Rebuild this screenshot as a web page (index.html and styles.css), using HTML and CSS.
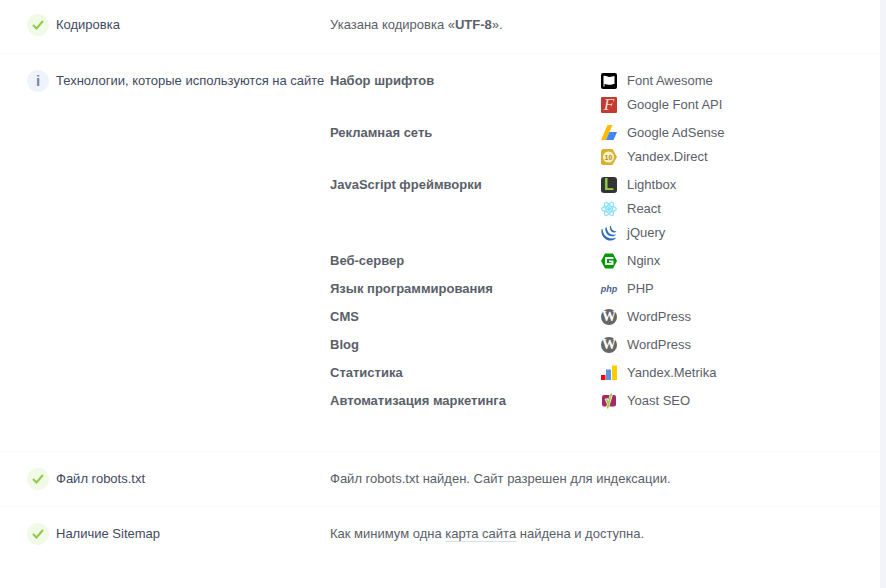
FILE: index.html
```html
<!DOCTYPE html>
<html lang="ru">
<head>
<meta charset="UTF-8">
<meta name="viewport" content="width=device-width, initial-scale=1.0">
<title>Технологии сайта</title>
<link rel="stylesheet" href="styles.css">
</head>
<body>

<div class="report">
  <!-- Кодировка -->
  <div class="row row-first">
    <div class="row-title">
      <span class="mark mark-ok"><svg width="12" height="10" viewBox="0 0 12 10"><path d="M1 5 4.500 8.500 11 1" fill="none" stroke="#92c94a" stroke-width="2"/></svg></span>
      Кодировка
    </div>
    <div class="row-body">Указана кодировка «<b>UTF-8</b>».</div>
  </div>

  <!-- Технологии -->
  <div class="row row-tech">
    <div class="row-title">
      <span class="mark mark-info">i</span>
      Технологии, которые используются на сайте
    </div>
    <div class="row-body">
      <div class="tech-group">
        <div class="tech-name">Набор шрифтов</div>
        <ul class="tech-list">
          <li><span class="logo">
            <svg width="16" height="16" viewBox="0 0 16 16"><rect width="16" height="16" rx="2" fill="#000"/><path d="M2.500 3C4.500 2.300 6.500 4 8.500 4 10.500 4 12 3 13.500 3V11C12 11 10.500 11.800 8.500 11.800 6.500 11.800 4.500 10.500 3.500 11V13.500H2.500Z" fill="#fff"/></svg>
          </span>Font Awesome</li>
          <li><span class="logo logo-gfont">F</span>Google Font API</li>
        </ul>
      </div>
      <div class="tech-group">
        <div class="tech-name">Рекламная сеть</div>
        <ul class="tech-list">
          <li><span class="logo">
            <svg width="16" height="16" viewBox="0 0 16 16"><path d="M0 15 6.500 0H11.500L5 15Z" fill="#fbbc04"/><path d="M8.500 7H16L12.500 15H5Z" fill="#4285f4"/></svg>
          </span>Google AdSense</li>
          <li><span class="logo">
            <svg width="16" height="16" viewBox="0 0 16 16"><path d="M1.500 0H11.500L16 8 11.500 16H1.500L0 14.500V1.500Z" fill="#d9b030"/><circle cx="7.500" cy="8" r="5.500" fill="#fdf3c4"/><text x="7.500" y="10.500" class="logo-ten">10</text></svg>
          </span>Yandex.Direct</li>
        </ul>
      </div>
      <div class="tech-group">
        <div class="tech-name">JavaScript фреймворки</div>
        <ul class="tech-list">
          <li><span class="logo logo-lightbox">L</span>Lightbox</li>
          <li><span class="logo">
            <svg width="16" height="16" viewBox="0 0 16 16" fill="none" stroke="#8be0fb" stroke-width="1.200"><ellipse cx="8" cy="8" rx="7.400" ry="3"/><ellipse cx="8" cy="8" rx="7.400" ry="3" transform="rotate(60 8 8)"/><ellipse cx="8" cy="8" rx="7.400" ry="3" transform="rotate(120 8 8)"/><circle cx="8" cy="8" r="1.500" fill="#8be0fb"/></svg>
          </span>React</li>
          <li><span class="logo">
            <svg width="16" height="16" viewBox="0 0 16 16" fill="#2f6bb8"><path d="M0.500 4C-0.500 10 4 16 10 15.500 12.500 15.300 14.500 14 15.500 12.500 12 14 7 14 4 10.500 2.500 8.500 1.500 6 1.500 4Z"/><path d="M4.500 2.500C3.500 7 7 11.500 11 11.300 13 11.200 14.500 10.300 15.500 9.200 12.500 10.300 9.500 9.800 7.500 7.500 6.500 6 5.800 4 5.800 2.500Z"/><path d="M9 1C8.300 4.500 10.500 7.500 13 7.600 14 7.600 15 7 15.500 6.300 13.500 6.600 11.500 5.500 10.500 3.500 10.200 2.800 10 1.800 10 1Z"/></svg>
          </span>jQuery</li>
        </ul>
      </div>
      <div class="tech-group">
        <div class="tech-name">Веб-сервер</div>
        <ul class="tech-list">
          <li><span class="logo">
            <svg width="16" height="16" viewBox="0 0 16 16"><path d="M4 0.500H12L16 8 12 15.500H4L0 8Z" fill="#009900"/><path d="M12.500 5H5V11H11.500V8.300H8" fill="none" stroke="#fff" stroke-width="1.800"/></svg>
          </span>Nginx</li>
        </ul>
      </div>
      <div class="tech-group">
        <div class="tech-name">Язык программирования</div>
        <ul class="tech-list">
          <li><span class="logo logo-php">php</span>PHP</li>
        </ul>
      </div>
      <div class="tech-group">
        <div class="tech-name">CMS</div>
        <ul class="tech-list">
          <li><span class="logo logo-wp">W</span>WordPress</li>
        </ul>
      </div>
      <div class="tech-group">
        <div class="tech-name">Blog</div>
        <ul class="tech-list">
          <li><span class="logo logo-wp">W</span>WordPress</li>
        </ul>
      </div>
      <div class="tech-group">
        <div class="tech-name">Статистика</div>
        <ul class="tech-list">
          <li><span class="logo">
            <svg width="16" height="16" viewBox="0 0 16 16"><rect y="10" width="4.500" height="5" fill="#ff0000"/><rect x="5" y="4.500" width="5" height="10.500" fill="#5b93dc"/><rect x="11" y="0.500" width="5" height="14.500" fill="#ffcc00"/></svg>
          </span>Yandex.Metrika</li>
        </ul>
      </div>
      <div class="tech-group">
        <div class="tech-name">Автоматизация маркетинга</div>
        <ul class="tech-list">
          <li><span class="logo">
            <svg width="16" height="16" viewBox="0 0 16 16"><rect x="1" y="2" width="14" height="11.500" rx="2" fill="#a4286a"/><path d="M5 5.500 7.500 11 10.500 1 M7.500 11 6.500 15" fill="none" stroke="#fff" stroke-width="3"/><path d="M5 5.500 7.500 11 10.500 0.500 M7.500 11 6.500 15.500" fill="none" stroke="#9fce3c" stroke-width="1.700"/></svg>
          </span>Yoast SEO</li>
        </ul>
      </div>
    </div>
  </div>

  <!-- robots.txt -->
  <div class="row">
    <div class="row-title">
      <span class="mark mark-ok"><svg width="12" height="10" viewBox="0 0 12 10"><path d="M1 5 4.500 8.500 11 1" fill="none" stroke="#92c94a" stroke-width="2"/></svg></span>
      Файл robots.txt
    </div>
    <div class="row-body">Файл robots.txt найден. Сайт разрешен для индексации.</div>
  </div>

  <!-- Sitemap -->
  <div class="row">
    <div class="row-title">
      <span class="mark mark-ok"><svg width="12" height="10" viewBox="0 0 12 10"><path d="M1 5 4.500 8.500 11 1" fill="none" stroke="#92c94a" stroke-width="2"/></svg></span>
      Наличие Sitemap
    </div>
    <div class="row-body">Как минимум одна <a href="#">карта сайта</a> найдена и доступна.</div>
  </div>
</div>

<div class="scrollbar"></div>

</body>
</html>
```

FILE: styles.css
```css
html, body {
  height: 100%;
}

body {
  font-family: "Liberation Sans", Arial, sans-serif;
  font-size: 13px;
  line-height: 24px;
  margin: 0;
  color: #5a6069;
  background: #fff;
  display: flex;
  overflow: hidden;
}

.report {
  flex: 1;
}

.scrollbar {
  width: 6px;
  background: #f2f4f9;
}

.row {
  display: flex;
  padding: 15px 0 15px 27px;
  border-bottom: 1px solid #fbfbfc;
}

.row:last-child {
  border-bottom: none;
}

.row-first {
  padding-top: 13px;
  padding-bottom: 16px;
}

.row-tech {
  padding-top: 15px;
  padding-bottom: 38px;
}

.row-title {
  width: 303px;
  flex-shrink: 0;
  display: flex;
  align-items: flex-start;
  gap: 7px;
  color: #3f4a5e;
  white-space: nowrap;
}

.mark {
  width: 22px;
  height: 22px;
  margin-top: 1px;
  border-radius: 50%;
  display: flex;
  align-items: center;
  justify-content: center;
}

.mark-ok {
  background: #f1f9e7;
}

.mark-info {
  background: #eff4fc;
  color: #7a86a0;
  font-weight: bold;
  font-size: 15px;
}

.row-body {
  flex: 1;
}

.row-body b,
.tech-name {
  font-weight: bold;
}

.row-body a {
  color: inherit;
  text-decoration: none;
  border-bottom: 1px solid #d5dfe6;
}

.tech-group {
  display: flex;
  margin-bottom: 4px;
}

.tech-group:last-child {
  margin-bottom: 0;
}

.tech-name {
  width: 271px;
  flex-shrink: 0;
}

.tech-list {
  list-style: none;
  margin: 0;
  padding: 0;
}

.tech-list li {
  display: flex;
  align-items: center;
  height: 24px;
}

.logo {
  width: 16px;
  height: 16px;
  margin-right: 10px;
  flex-shrink: 0;
  display: flex;
  align-items: center;
  justify-content: center;
}

.logo-gfont {
  background: #c53a30;
  border-radius: 1px;
  color: #f8dcd8;
  font-family: "Liberation Serif", serif;
  font-style: italic;
  font-size: 17px;
  line-height: 16px;
}

.logo-ten {
  font-family: "Liberation Sans", sans-serif;
  font-size: 7px;
  font-weight: bold;
  fill: #a58a26;
  text-anchor: middle;
}

.logo-lightbox {
  background: #333;
  border-radius: 3px;
  color: #8ed04b;
  font-weight: bold;
  font-size: 16px;
  line-height: 16px;
}

.logo-php {
  color: #4f5b93;
  font-style: italic;
  font-weight: bold;
  font-size: 9px;
  line-height: 16px;
}

.logo-wp {
  background: #666;
  border-radius: 50%;
  color: #fff;
  font-family: "Liberation Serif", serif;
  font-weight: bold;
  font-size: 14px;
  line-height: 16px;
}
```
